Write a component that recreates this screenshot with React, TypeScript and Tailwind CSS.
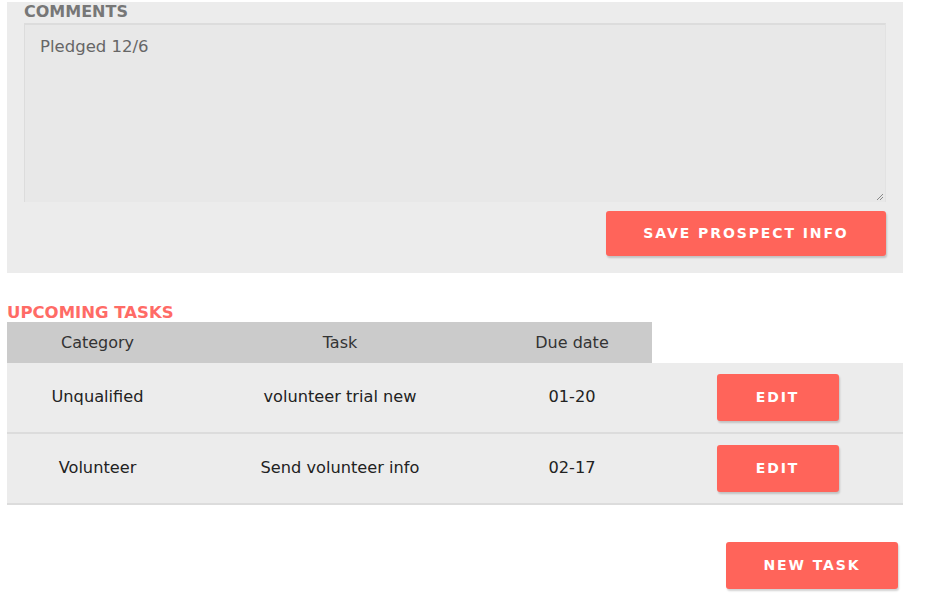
import React from "react";

const font = { fontFamily: '"DejaVu Sans", Verdana, sans-serif' };

function RedButton({ label, className }: { label: string; className: string }) {
  return (
    <button
      className={`flex items-center justify-center rounded-[3px] bg-[#ff645a] text-white font-bold text-[14px] tracking-[1.9px] shadow-[1px_2px_2px_rgba(0,0,0,0.18)] ${className}`}
    >
      {label}
    </button>
  );
}

export default function App() {
  const rows = [
    { cat: "Unqualified", task: "volunteer trial new", due: "01-20" },
    { cat: "Volunteer", task: "Send volunteer info", due: "02-17" },
  ];
  return (
    <div className="w-[948px] h-[604px] bg-white" style={font}>
      <div className="pt-[2px] pl-[7px] w-[903px]">
        <div className="bg-[#ececec] h-[271px] pl-[17px] pr-[17px] flex flex-col">
          <div className="text-[16px] font-bold text-[#777] leading-[19px] h-[21px]">COMMENTS</div>
          <div className="h-[179px] bg-[#e8e8e8] border-t-[2px] border-l border-r border-[#dcdcdc] border-r-[#e2e2e2] relative px-[15px] pt-[10px] text-[16.5px] text-[#666]">
            Pledged 12/6
            <svg className="absolute right-[1px] bottom-[1px]" width="8" height="8" viewBox="0 0 8 8">
              <path d="M7 1 L1 7 M7 4 L4 7" stroke="#888" strokeWidth="1" />
            </svg>
          </div>
          <div className="flex justify-end mt-[9px]">
            <RedButton label="SAVE PROSPECT INFO" className="w-[280px] h-[45px]" />
          </div>
        </div>
        <div className="mt-[31px] text-[16.5px] font-bold text-[#ff6b66] leading-[18px] h-[18px]">UPCOMING TASKS</div>
        <div className="flex w-[645px] h-[41px] bg-[#cbcbcb] text-[16px] text-[#333] items-center">
          <div className="w-[181px] text-center">Category</div>
          <div className="w-[304px] text-center">Task</div>
          <div className="w-[160px] text-center">Due date</div>
        </div>
        {rows.map((r) => (
          <div key={r.cat} className="flex h-[71px] bg-[#ececec] border-b-[2px] border-[#dcdcdc] text-[16.2px] text-[#222] items-center">
            <div className="w-[181px] text-center">{r.cat}</div>
            <div className="w-[304px] text-center">{r.task}</div>
            <div className="w-[160px] text-center">{r.due}</div>
            <div className="flex-1 flex justify-center">
              <RedButton label="EDIT" className="w-[122px] h-[47px]" />
            </div>
          </div>
        ))}
        <div className="flex justify-end pr-[5px] mt-[37px]">
          <RedButton label="NEW TASK" className="w-[172px] h-[47px]" />
        </div>
      </div>
    </div>
  );
}
